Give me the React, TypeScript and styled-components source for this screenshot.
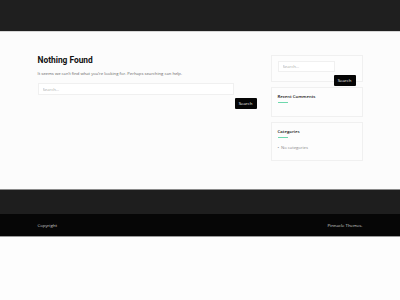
import styled, { createGlobalStyle } from 'styled-components';

const GlobalStyle = createGlobalStyle`
  html, body {
    margin: 0;
    padding: 0;
    background: #fdfdfd;
    font-family: "Open Sans", "Liberation Sans", sans-serif;
  }
`;

const Header = styled.header`
  height: 31px;
  background-color: #1f1f1f;
  border-bottom: 1px solid #d6d6d6;
`;

const Main = styled.main`
  height: 157px;
  box-sizing: border-box;
  padding-top: 23px;
  background-color: #fcfcfc;
`;

const Container = styled.div`
  width: 325px;
  margin: 0 auto;
  display: grid;
  grid-template-columns: 219px 92px;
  column-gap: 14px;
  align-items: start;
`;

const Content = styled.section`
  display: flex;
  flex-direction: column;

  h1 {
    font-family: Roboto, "Liberation Sans", sans-serif;
    font-weight: 700;
    font-size: 8.4px;
    line-height: 11px;
    color: #111;
    margin: 0 0 5px;
  }

  p {
    font-size: 4.2px;
    line-height: 6px;
    color: #666;
    margin: 0 0 6px;
  }
`;

const SearchForm = styled.form<{ $inputWidth: number }>`
  display: flex;
  flex-direction: column;
  gap: 3px;

  input {
    width: ${(p) => p.$inputWidth}px;
    height: ${(p) => (p.$inputWidth > 100 ? 12 : 11)}px;
    box-sizing: border-box;
    border: 1px solid #f0f0f0;
    background: #fff;
    padding: 0 4px;
    font-family: "Open Sans", "Liberation Sans", sans-serif;
    font-size: 4.2px;
    color: #999;
    outline: none;

    &::placeholder {
      color: #aaa;
    }
  }
`;

const Button = styled.button`
  align-self: flex-end;
  width: 22px;
  height: 11px;
  padding: 0;
  border: none;
  border-radius: 1px;
  background-color: #050505;
  color: #f2f2f2;
  font-family: "Open Sans", "Liberation Sans", sans-serif;
  font-size: 4.3px;
  line-height: 11px;
`;

const Sidebar = styled.aside`
  display: flex;
  flex-direction: column;
  gap: 5px;
`;

const Widget = styled.div<{ $height: number }>`
  height: ${(p) => p.$height}px;
  box-sizing: border-box;
  border: 1px solid #f0f0f0;
  background: #fdfdfd;
  padding: 5px 6px 0;
`;

const WidgetTitle = styled.h3`
  margin: 0;
  font-family: "Open Sans", "Liberation Sans", sans-serif;
  font-weight: 600;
  font-size: 4.3px;
  line-height: 6px;
  color: #111;

  &::after {
    content: '';
    display: block;
    width: 10px;
    height: 1px;
    margin-top: 3px;
    background-color: #6ed8ad;
  }
`;

const List = styled.ul`
  margin: 7px 0 0;
  padding: 0;
  list-style: none;

  li {
    font-size: 4.2px;
    line-height: 6px;
    color: #888;

    &::before {
      content: '•';
      margin-right: 2px;
    }
  }
`;

const Footer = styled.footer`
  border-top: 1px solid #8a8a8a;
`;

const FooterTop = styled.div`
  height: 24px;
  background-color: #1e1e1e;
`;

const FooterBottom = styled.div`
  height: 22px;
  background-color: #060606;
  border-bottom: 1px solid #9a9a9a;
`;

const FooterInner = styled.div`
  width: 325px;
  height: 100%;
  margin: 0 auto;
  display: flex;
  align-items: center;
  justify-content: space-between;
  font-size: 4.3px;
  color: #cfcfcf;
`;

function App() {
  return (
    <>
      <GlobalStyle />
      <Header />
      <Main>
        <Container>
          <Content>
            <h1>Nothing Found</h1>
            <p>It seems we can&rsquo;t find what you&rsquo;re looking for. Perhaps searching can help.</p>
            <SearchForm $inputWidth={196}>
              <input placeholder="Search..." />
              <Button type="button">Search</Button>
            </SearchForm>
          </Content>
          <Sidebar>
            <Widget $height={27}>
              <SearchForm $inputWidth={57}>
                <input placeholder="Search..." />
                <Button type="button">Search</Button>
              </SearchForm>
            </Widget>
            <Widget $height={30}>
              <WidgetTitle>Recent Comments</WidgetTitle>
            </Widget>
            <Widget $height={39}>
              <WidgetTitle>Categories</WidgetTitle>
              <List>
                <li>No categories</li>
              </List>
            </Widget>
          </Sidebar>
        </Container>
      </Main>
      <Footer>
        <FooterTop />
        <FooterBottom>
          <FooterInner>
            <span>Copyright</span>
            <span>Pinnacle Themes.</span>
          </FooterInner>
        </FooterBottom>
      </Footer>
    </>
  );
}

export default App;
